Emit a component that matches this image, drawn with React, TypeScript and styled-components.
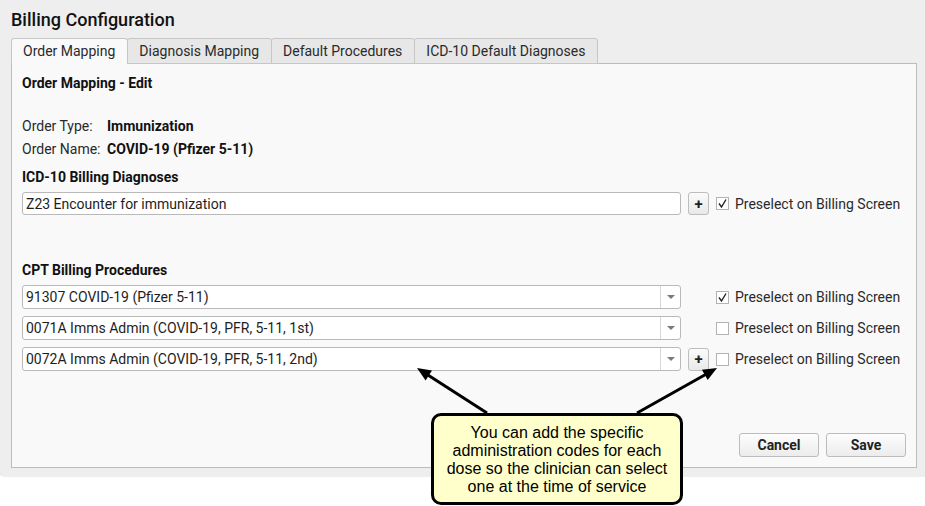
import React from "react";
import styled, { createGlobalStyle } from "styled-components";

const GlobalStyle = createGlobalStyle`
  body {
    margin: 0;
    background: #ffffff;
    font-family: Roboto, "Liberation Sans", Arial, sans-serif;
    color: #1e1e1e;
  }
`;

const Page = styled.div`
  position: relative;
  width: 925px;
  height: 506px;
  overflow: hidden;
`;

const Window = styled.div`
  height: 477px;
  box-sizing: border-box;
  display: flex;
  flex-direction: column;
  padding: 0 8px 9px 11px;
  background: #eeeeee;
  border-left: 1px solid #e2e2e2;
  border-bottom-left-radius: 6px;
  margin-left: -1px;
`;

const Title = styled.div`
  padding-top: 10px;
  margin-bottom: 8px;
  font-size: 18px;
  line-height: 20px;
  font-weight: 500;
  color: #111;
`;

const TabBar = styled.div`
  display: flex;
  position: relative;
  z-index: 1;
  margin-bottom: -1px;
`;

const Tab = styled.div<{ $active?: boolean }>`
  height: 26px;
  box-sizing: border-box;
  display: flex;
  align-items: center;
  padding: 0 12px 1px 11px;
  font-size: 14px;
  color: #2a2a2a;
  border: 1px solid #c6c6c6;
  border-bottom: ${(p) => (p.$active ? "none" : "1px solid #c6c6c6")};
  border-radius: 3px 3px 0 0;
  background: ${(p) => (p.$active ? "#f9f9f9" : "#e7e7e7")};
  & + & {
    margin-left: -1px;
  }
`;

const Panel = styled.div`
  flex: 1;
  display: flex;
  flex-direction: column;
  padding: 10px 10px 10px 10px;
  background: #f9f9f9;
  border: 1px solid #bcbcbc;
`;

const SectionTitle = styled.div<{ $gap?: number }>`
  font-size: 14px;
  line-height: 18px;
  font-weight: 700;
  color: #111;
  margin-top: ${(p) => p.$gap ?? 0}px;
`;

const InfoRow = styled.div<{ $gap: number }>`
  display: flex;
  font-size: 14px;
  line-height: 18px;
  margin-top: ${(p) => p.$gap}px;
`;

const InfoLabel = styled.span`
  width: 85px;
  color: #2a2a2a;
`;

const InfoValue = styled.span`
  font-weight: 700;
  color: #111;
`;

const FieldRow = styled.div<{ $gap: number }>`
  display: grid;
  grid-template-columns: 659px 21px auto;
  column-gap: 7px;
  align-items: center;
  margin-top: ${(p) => p.$gap}px;
`;

const TextBox = styled.div`
  grid-column: 1;
  height: 23px;
  box-sizing: border-box;
  display: flex;
  align-items: center;
  padding: 0 3px;
  font-size: 14px;
  color: #1e1e1e;
  background: #fff;
  border: 1px solid #b9b9b9;
  border-radius: 3px;
`;

const SelectBox = styled.div`
  grid-column: 1;
  height: 24px;
  box-sizing: border-box;
  display: flex;
  align-items: stretch;
  font-size: 14px;
  color: #1e1e1e;
  background: #fff;
  border: 1px solid #b9b9b9;
  border-radius: 3px;
`;

const SelectText = styled.div`
  flex: 1;
  display: flex;
  align-items: center;
  padding: 0 3px;
`;

const SelectArrow = styled.div`
  width: 19px;
  display: flex;
  align-items: center;
  justify-content: center;
  border-left: 1px solid #d6d6d6;
  &::after {
    content: "";
    border-left: 4px solid transparent;
    border-right: 4px solid transparent;
    border-top: 4px solid #7a7a7a;
  }
`;

const PlusButton = styled.div`
  grid-column: 2;
  height: 23px;
  box-sizing: border-box;
  display: flex;
  align-items: center;
  justify-content: center;
  font-size: 15px;
  font-weight: 700;
  color: #222;
  background: linear-gradient(#fbfbfb, #e9e9e9);
  border: 1px solid #bdbdbd;
  border-radius: 3px;
`;

const Preselect = styled.label`
  grid-column: 3;
  display: flex;
  align-items: center;
  gap: 6px;
  font-size: 14px;
  color: #2a2a2a;
`;

const Check = styled.span`
  width: 13px;
  height: 13px;
  box-sizing: border-box;
  display: flex;
  align-items: center;
  justify-content: center;
  background: #fff;
  border: 1px solid #b3b3b3;
`;

const Footer = styled.div`
  margin-top: auto;
  display: flex;
  justify-content: flex-end;
  gap: 7px;
`;

const Button = styled.div`
  width: 80px;
  height: 24px;
  box-sizing: border-box;
  display: flex;
  align-items: center;
  justify-content: center;
  font-size: 14px;
  font-weight: 700;
  color: #222;
  background: linear-gradient(#fdfdfd, #ececec);
  border: 1px solid #bcbcbc;
  border-radius: 3px;
`;

const Arrows = styled.svg`
  position: absolute;
  left: 0;
  top: 0;
  pointer-events: none;
`;

const Callout = styled.div`
  position: absolute;
  left: 431px;
  top: 413px;
  width: 252px;
  height: 92px;
  box-sizing: border-box;
  padding-top: 8px;
  background: #ffffcc;
  border: 3px solid #000;
  border-radius: 10px;
  font-family: "Liberation Sans", Arial, sans-serif;
  font-size: 16px;
  line-height: 18px;
  text-align: center;
  color: #000;
`;

const Tick = () => (
  <svg width="11" height="11" viewBox="0 0 11 11">
    <path d="M2 5.5 L4.5 9 L9 1.5" fill="none" stroke="#222" strokeWidth="1.4" />
  </svg>
);

const PreselectBox: React.FC<{ checked?: boolean }> = ({ checked }) => (
  <Preselect>
    <Check>{checked && <Tick />}</Check>
    Preselect on Billing Screen
  </Preselect>
);

const Select: React.FC<{ value: string }> = ({ value }) => (
  <SelectBox>
    <SelectText>{value}</SelectText>
    <SelectArrow />
  </SelectBox>
);

const procedures = [
  { code: "91307 COVID-19 (Pfizer 5-11)", checked: true, plus: false },
  { code: "0071A Imms Admin (COVID-19, PFR, 5-11, 1st)", checked: false, plus: false },
  { code: "0072A Imms Admin (COVID-19, PFR, 5-11, 2nd)", checked: false, plus: true },
];

export default function App() {
  return (
    <>
      <GlobalStyle />
      <Page>
        <Window>
          <Title>Billing Configuration</Title>
          <TabBar>
            <Tab $active>Order Mapping</Tab>
            <Tab>Diagnosis Mapping</Tab>
            <Tab>Default Procedures</Tab>
            <Tab>ICD-10 Default Diagnoses</Tab>
          </TabBar>
          <Panel>
            <SectionTitle>Order Mapping - Edit</SectionTitle>
            <InfoRow $gap={25}>
              <InfoLabel>Order Type:</InfoLabel>
              <InfoValue>Immunization</InfoValue>
            </InfoRow>
            <InfoRow $gap={5}>
              <InfoLabel>Order Name:</InfoLabel>
              <InfoValue>COVID-19 (Pfizer 5-11)</InfoValue>
            </InfoRow>
            <SectionTitle $gap={10}>ICD-10 Billing Diagnoses</SectionTitle>
            <FieldRow $gap={6}>
              <TextBox>Z23 Encounter for immunization</TextBox>
              <PlusButton>+</PlusButton>
              <PreselectBox checked />
            </FieldRow>
            <SectionTitle $gap={46}>CPT Billing Procedures</SectionTitle>
            {procedures.map((p, i) => (
              <FieldRow key={p.code} $gap={i === 0 ? 6 : 7}>
                <Select value={p.code} />
                {p.plus && <PlusButton>+</PlusButton>}
                <PreselectBox checked={p.checked} />
              </FieldRow>
            ))}
            <Footer>
              <Button>Cancel</Button>
              <Button>Save</Button>
            </Footer>
          </Panel>
        </Window>
        <Arrows width="925" height="506">
          <line x1="487" y1="413" x2="427.5" y2="374.8" stroke="#000" strokeWidth="3" />
          <polygon points="417,368 432,370.5 425.6,380.6" fill="#000" />
          <line x1="637" y1="413" x2="706" y2="374.2" stroke="#000" strokeWidth="3" />
          <polygon points="717,368 707.7,380.1 701.9,369.7" fill="#000" />
        </Arrows>
        <Callout>
          You can add the specific
          <br />
          administration codes for each
          <br />
          dose so the clinician can select
          <br />
          one at the time of service
        </Callout>
      </Page>
    </>
  );
}
